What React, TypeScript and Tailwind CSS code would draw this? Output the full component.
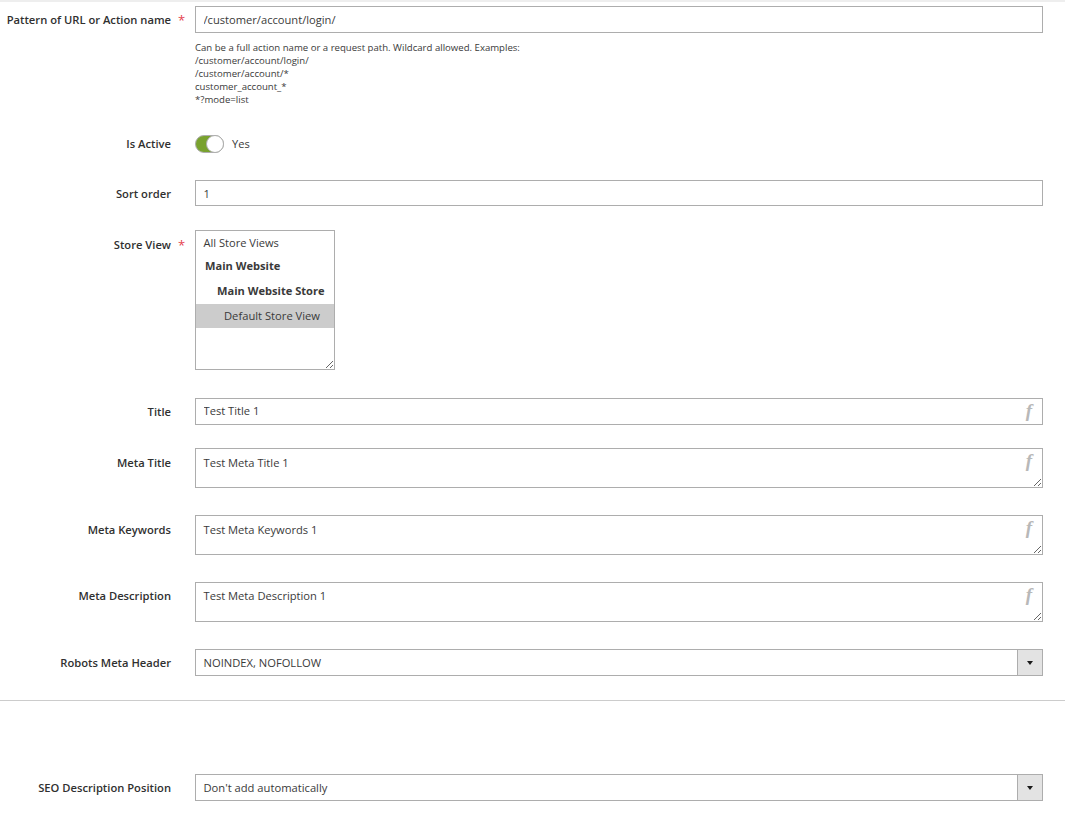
import React from 'react';

const labelClass = "w-[171px] shrink-0 text-right text-[11.2px] font-semibold leading-[14px] text-[#303030]";
const boxClass = "w-full border border-[#adadad] bg-white pl-[7.5px] pr-[30px] text-[11.15px] text-[#3a3a3a] outline-none font-['Open_Sans',sans-serif]";

const Row: React.FC<{ label: string; required?: boolean; labelTop?: string; className?: string; children: React.ReactNode }> = ({
  label,
  required,
  labelTop = 'pt-[7px]',
  className = '',
  children,
}) => (
  <div className={`flex ${className}`}>
    <div className={`${labelClass} ${labelTop}`}>{label}</div>
    <div className={`w-[24px] shrink-0 pl-[7px] text-[13px] leading-[14px] text-[#e5434f] ${labelTop}`}>{required ? '*' : ''}</div>
    <div className="w-[848px] shrink-0">{children}</div>
  </div>
);

const VarIcon = () => (
  <span className="absolute right-[11px] top-[1px] font-['Liberation_Serif',serif] text-[19px] font-bold italic leading-[24px] text-[#b8b8b8]">f</span>
);

const TextInput: React.FC<{ value: string; showVar?: boolean; className?: string }> = ({ value, showVar, className = 'h-[27px]' }) => (
  <div className="relative">
    <input readOnly value={value} className={`${boxClass} block ${className}`} />
    {showVar && <VarIcon />}
  </div>
);

const TextArea: React.FC<{ value: string; className?: string }> = ({ value, className = 'pt-[6px]' }) => (
  <div className="relative">
    <textarea readOnly value={value} className={`${boxClass} block h-[40px] leading-[15px] ${className}`} />
    <VarIcon />
  </div>
);

const SelectBox: React.FC<{ value: string }> = ({ value }) => (
  <div className="flex h-[27px] w-full border border-[#adadad] bg-white">
    <div className="flex flex-1 items-center pl-[7.5px] pt-[1px] text-[11.2px] text-[#3a3a3a]">{value}</div>
    <div className="flex w-[25px] items-center justify-center border-l border-[#adadad] bg-[#e3e3e3]">
      <span className="h-0 w-0 border-x-[3.5px] border-t-[4px] border-x-transparent border-t-[#1a1a1a]" />
    </div>
  </div>
);

export default function App() {
  return (
    <div className="h-[816px] w-[1065px] overflow-hidden bg-white font-['Open_Sans',sans-serif]">
      <div className="h-[2px] bg-[#eeeeee]" />
      <Row label="Pattern of URL or Action name" required className="mt-[4px]">
        <TextInput value="/customer/account/login/" />
        <div className="mt-[8px] text-[9.6px] leading-[13px] text-[#3a3a3a]">
          <div>Can be a full action name or a request path. Wildcard allowed. Examples:</div>
          <div>/customer/account/login/</div>
          <div>/customer/account/*</div>
          <div>customer_account_*</div>
          <div>*?mode=list</div>
        </div>
      </Row>

      <Row label="Is Active" labelTop="pt-[2px]" className="mt-[29px]">
        <div className="flex h-[18px] items-center gap-[8px]">
          <div className="relative h-[18px] w-[29px] rounded-full border border-[#adadad] bg-[#79a22e]">
            <div className="absolute right-[-1px] top-[-1px] h-[18px] w-[18px] rounded-full border border-[#adadad] bg-white" />
          </div>
          <span className="text-[11.1px] text-[#3a3a3a]">Yes</span>
        </div>
      </Row>

      <Row label="Sort order" className="mt-[27px]">
        <TextInput value="1" className="h-[26px]" />
      </Row>

      <Row label="Store View" required labelTop="pt-[8px]" className="mt-[24px]">
        <div className="relative h-[140px] w-[140px] resize overflow-hidden border border-[#adadad] bg-white text-[11.1px] text-[#3a3a3a]">
          <div className="pl-[7.5px] pt-[5px] leading-[14px]">All Store Views</div>
          <div className="mt-[8px] pl-[9px] font-bold leading-[16px]">Main Website</div>
          <div className="mt-[9px] pl-[21px] font-bold leading-[16px]">Main Website Store</div>
          <div className="mt-[5px] h-[24px] bg-[#cccccc] pl-[28px] text-[11.2px] leading-[24px]">Default Store View</div>
        </div>
      </Row>

      <Row label="Title" className="mt-[28px]">
        <TextInput value="Test Title 1" showVar className="h-[27px] pb-[2px]" />
      </Row>

      <Row label="Meta Title" labelTop="pt-[8px]" className="mt-[23px]">
        <TextArea value="Test Meta Title 1" />
      </Row>

      <Row label="Meta Keywords" labelTop="pt-[8px]" className="mt-[27px]">
        <TextArea value="Test Meta Keywords 1" />
      </Row>

      <Row label="Meta Description" className="mt-[27px]">
        <TextArea value="Test Meta Description 1" className="pt-[5px]" />
      </Row>

      <Row label="Robots Meta Header" className="mt-[27px]">
        <SelectBox value="NOINDEX, NOFOLLOW" />
      </Row>

      <div className="mt-[24px] h-px bg-[#cccccc]" />

      <Row label="SEO Description Position" className="mt-[73px]">
        <SelectBox value="Don't add automatically" />
      </Row>
    </div>
  );
}
